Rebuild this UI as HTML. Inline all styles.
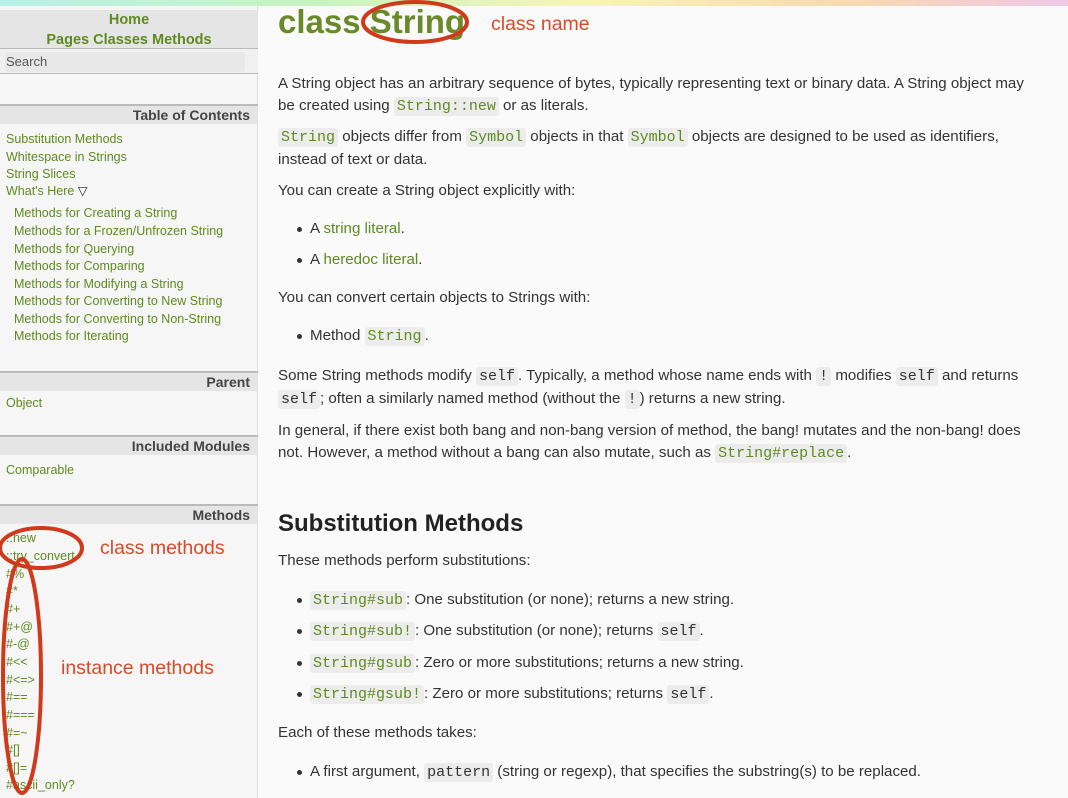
<!DOCTYPE html>
<html><head><meta charset="utf-8"><style>
*{margin:0;padding:0;box-sizing:border-box}
body{width:1068px;height:798px;overflow:hidden;background:#fafafa;font-family:"Liberation Sans",sans-serif;position:relative}
.top{position:absolute;left:0;top:0;width:1068px;height:6px;background:linear-gradient(90deg,#b8f0e8,#c8f4c0 30%,#f8f4b8 55%,#f8d8b0 80%,#f0c8e8)}
.side{position:absolute;left:0;top:6px;width:258px;height:792px;background:#f6f6f6;border-right:1px solid #ddd}
.a{position:absolute;font-size:12.5px;color:#5f8a1f;line-height:16px;white-space:nowrap}
.hd{position:absolute;left:0;width:258px;height:20px;background:#e5e5e5;border-top:2px solid #bbb;font-weight:bold;font-size:14px;color:#444;text-align:right;padding-right:8px;line-height:18px}
.m{position:absolute;left:278px;font-size:15.1px;color:#333;line-height:20px;white-space:nowrap}
code{font-family:"Liberation Mono",monospace;background:#ececec;border-radius:3px;padding:1px 3px;font-size:15px;color:#333}
code.g{color:#5f8a1f}
.l{color:#5f8a1f}
.b{position:absolute;left:297px;width:5px;height:5px;border-radius:50%;background:#333}
</style></head><body>
<div class="top"></div>
<div class="side">
<div style="position:absolute;left:0;top:4px;width:258px;height:38px;background:#e5e5e5;text-align:center;font-weight:bold;color:#5f8a1f;font-size:14.5px;line-height:20px">Home<br>Pages Classes Methods</div>
<div style="position:absolute;left:0;top:42px;width:258px;height:26px;background:#f0f0f0;border-top:1px solid #bbb;border-bottom:1px solid #bbb"><div style="position:absolute;left:5px;top:3px;width:240px;height:20px;background:#e8e8e8;border-radius:3px;font-size:13px;color:#555;padding-left:1px;line-height:20px">Search</div></div>
</div>
<div class="hd" style="top:104px">Table of Contents</div>
<div class="a" style="left:6px;top:131px">Substitution Methods</div>
<div class="a" style="left:6px;top:149px">Whitespace in Strings</div>
<div class="a" style="left:6px;top:166px">String Slices</div>
<div class="a" style="left:6px;top:183px">What's Here <span style="color:#222">▽</span></div>
<div class="a" style="left:14px;top:205px">Methods for Creating a String</div>
<div class="a" style="left:14px;top:223px">Methods for a Frozen/Unfrozen String</div>
<div class="a" style="left:14px;top:241px">Methods for Querying</div>
<div class="a" style="left:14px;top:258px">Methods for Comparing</div>
<div class="a" style="left:14px;top:276px">Methods for Modifying a String</div>
<div class="a" style="left:14px;top:293px">Methods for Converting to New String</div>
<div class="a" style="left:14px;top:311px">Methods for Converting to Non-String</div>
<div class="a" style="left:14px;top:328px">Methods for Iterating</div>
<div class="hd" style="top:371px">Parent</div>
<div class="a" style="left:6px;top:395px">Object</div>
<div class="hd" style="top:435px">Included Modules</div>
<div class="a" style="left:6px;top:462px">Comparable</div>
<div class="hd" style="top:504px">Methods</div>
<div class="a" style="left:6px;top:530px">::new</div>
<div class="a" style="left:6px;top:548px">::try_convert</div>
<div class="a" style="left:6px;top:566px">#%</div>
<div class="a" style="left:6px;top:583px">#*</div>
<div class="a" style="left:6px;top:601px">#+</div>
<div class="a" style="left:6px;top:619px">#+@</div>
<div class="a" style="left:6px;top:636px">#-@</div>
<div class="a" style="left:6px;top:654px">#&lt;&lt;</div>
<div class="a" style="left:6px;top:672px">#&lt;=&gt;</div>
<div class="a" style="left:6px;top:689px">#==</div>
<div class="a" style="left:6px;top:707px">#===</div>
<div class="a" style="left:6px;top:725px">#=~</div>
<div class="a" style="left:6px;top:742px">#[]</div>
<div class="a" style="left:6px;top:760px">#[]=</div>
<div class="a" style="left:6px;top:777px">#ascii_only?</div>

<div style="position:absolute;left:278px;top:2px;font-size:33px;font-weight:bold;color:#6a8a2a;line-height:40px">class String</div>
<div style="position:absolute;left:491px;top:13px;font-size:19.5px;color:#d94a2a">class name</div>
<div style="position:absolute;left:100px;top:537px;font-size:19.5px;color:#d94a2a">class methods</div>
<div style="position:absolute;left:61px;top:657px;font-size:19.5px;color:#d94a2a">instance methods</div>

<div class="m" style="top:74px">A String object has an arbitrary sequence of bytes, typically representing text or binary data. A String object may</div>
<div class="m" style="top:96px">be created using <code class="g">String::new</code> or as literals.</div>
<div class="m" style="top:127px"><code class="g">String</code> objects differ from <code class="g">Symbol</code> objects in that <code class="g">Symbol</code> objects are designed to be used as identifiers,</div>
<div class="m" style="top:150px">instead of text or data.</div>
<div class="m" style="top:181px">You can create a String object explicitly with:</div>
<div class="b" style="top:227px"></div><div class="m" style="left:310px;top:219px">A <span class="l">string literal</span>.</div>
<div class="b" style="top:258px"></div><div class="m" style="left:310px;top:250px">A <span class="l">heredoc literal</span>.</div>
<div class="m" style="top:288px">You can convert certain objects to Strings with:</div>
<div class="b" style="top:334px"></div><div class="m" style="left:310px;top:326px">Method <code class="g">String</code>.</div>
<div class="m" style="top:366px">Some String methods modify <code>self</code>. Typically, a method whose name ends with <code>!</code> modifies <code>self</code> and returns</div>
<div class="m" style="top:389px"><code>self</code>; often a similarly named method (without the <code>!</code>) returns a new string.</div>
<div class="m" style="top:421px">In general, if there exist both bang and non-bang version of method, the bang! mutates and the non-bang! does</div>
<div class="m" style="top:443px">not. However, a method without a bang can also mutate, such as <code class="g">String#replace</code>.</div>
<div style="position:absolute;left:278px;top:510px;font-size:24px;font-weight:bold;color:#222">Substitution Methods</div>
<div class="m" style="top:551px">These methods perform substitutions:</div>
<div class="b" style="top:598px"></div><div class="m" style="left:310px;top:590px"><code class="g">String#sub</code>: One substitution (or none); returns a new string.</div>
<div class="b" style="top:629px"></div><div class="m" style="left:310px;top:621px"><code class="g">String#sub!</code>: One substitution (or none); returns <code>self</code>.</div>
<div class="b" style="top:661px"></div><div class="m" style="left:310px;top:653px"><code class="g">String#gsub</code>: Zero or more substitutions; returns a new string.</div>
<div class="b" style="top:692px"></div><div class="m" style="left:310px;top:684px"><code class="g">String#gsub!</code>: Zero or more substitutions; returns <code>self</code>.</div>
<div class="m" style="top:723px">Each of these methods takes:</div>
<div class="b" style="top:770px"></div><div class="m" style="left:310px;top:762px">A first argument, <code>pattern</code> (string or regexp), that specifies the substring(s) to be replaced.</div>

<svg style="position:absolute;left:0;top:0" width="1068" height="798">
<g fill="none" stroke="#d03a1a" stroke-width="4">
<ellipse cx="415" cy="22" rx="52" ry="20"/>
<ellipse cx="41" cy="548" rx="41" ry="20"/>
<ellipse cx="22" cy="676" rx="19" ry="117"/>
</g></svg>
</body></html>
